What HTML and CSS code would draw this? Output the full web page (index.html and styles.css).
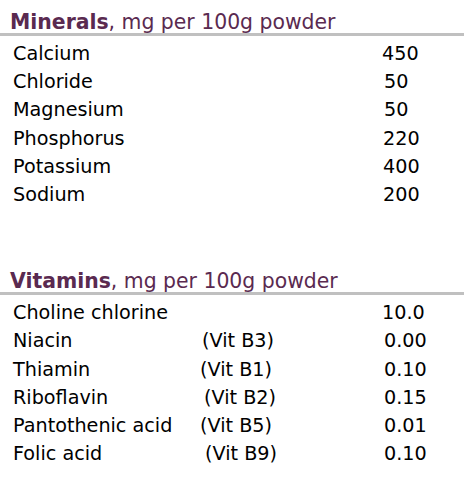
FILE: index.html
```html
<!DOCTYPE html>
<html>
<head>
<meta charset="utf-8">
<link rel="stylesheet" href="styles.css">
</head>
<body>
<section class="panel">
  <h2 class="panel-title"><b>Minerals</b>, mg per 100g powder</h2>
  <div class="rows">
    <div class="row"><span class="name">Calcium</span><span class="vit"></span><span class="val">450</span></div>
    <div class="row"><span class="name">Chloride</span><span class="vit"></span><span class="val v2">50</span></div>
    <div class="row"><span class="name">Magnesium</span><span class="vit"></span><span class="val v2">50</span></div>
    <div class="row"><span class="name">Phosphorus</span><span class="vit"></span><span class="val v1">220</span></div>
    <div class="row"><span class="name">Potassium</span><span class="vit"></span><span class="val v1">400</span></div>
    <div class="row"><span class="name">Sodium</span><span class="vit"></span><span class="val v1">200</span></div>
  </div>
</section>
<section class="panel second">
  <h2 class="panel-title"><b>Vitamins</b>, mg per 100g powder</h2>
  <div class="rows">
    <div class="row"><span class="name">Choline chlorine</span><span class="vit"></span><span class="val">10.0</span></div>
    <div class="row"><span class="name">Niacin</span><span class="vit o2">(Vit B3)</span><span class="val v2">0.00</span></div>
    <div class="row"><span class="name">Thiamin</span><span class="vit">(Vit B1)</span><span class="val v2">0.10</span></div>
    <div class="row"><span class="name">Riboflavin</span><span class="vit o4">(Vit B2)</span><span class="val v2">0.15</span></div>
    <div class="row"><span class="name">Pantothenic acid</span><span class="vit">(Vit B5)</span><span class="val v2">0.01</span></div>
    <div class="row"><span class="name">Folic acid</span><span class="vit o5">(Vit B9)</span><span class="val v2">0.10</span></div>
  </div>
</section>
</body>
</html>
```
FILE: styles.css
```css
html, body {
  margin: 0;
  padding: 0;
  background: #ffffff;
}
body {
  font-family: "DejaVu Sans", Verdana, sans-serif;
  font-size: 19.2px;
  color: #000000;
  width: 464px;
}
.panel-title {
  margin: 0;
  padding: 11px 0 0 10px;
  font-size: 20.4px;
  font-weight: normal;
  line-height: 22px;
  color: #5a2a50;
  border-bottom: 3px solid #c0c0c0;
}
.panel-title b {
  font-weight: bold;
}
.second {
  margin-top: 50px;
}
.rows {
  padding: 4px 0 0 13px;
}
.row {
  display: grid;
  grid-template-columns: 187px 182px auto;
  line-height: 28.2px;
  white-space: nowrap;
}
.o2 { padding-left: 2px; }
.o4 { padding-left: 4px; }
.o5 { padding-left: 5px; }
.v1 { padding-left: 1px; }
.v2 { padding-left: 2px; }
```
